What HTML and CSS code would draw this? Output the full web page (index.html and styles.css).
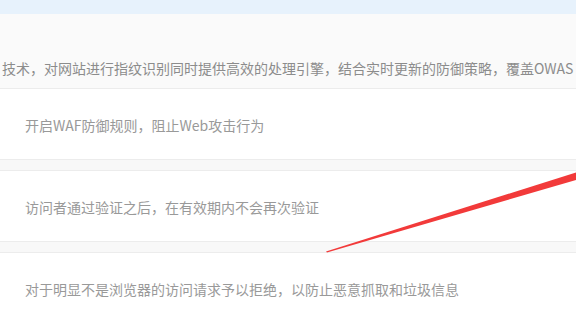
FILE: index.html
```html
<!DOCTYPE html>
<html lang="zh-CN">
<head>
<meta charset="utf-8">
<title>WAF</title>
<link rel="stylesheet" href="styles.css">
</head>
<body>
<div class="page">
  <div class="topbar"></div>
  <div class="intro">
    <p class="intro-text">技术，对网站进行指纹识别同时提供高效的处理引擎，结合实时更新的防御策略，覆盖OWAS</p>
  </div>
  <div class="cards">
    <div class="card"><span class="desc">开启WAF防御规则，阻止Web攻击行为</span></div>
    <div class="card"><span class="desc">访问者通过验证之后，在有效期内不会再次验证</span></div>
    <div class="card"><span class="desc">对于明显不是浏览器的访问请求予以拒绝，以防止恶意抓取和垃圾信息</span></div>
  </div>
  <svg class="arrow" width="576" height="323" viewBox="0 0 576 323">
    <polygon points="326,251.5 576,172.5 576,180 327,252.5" fill="#f23a3a"/>
  </svg>
</div>
</body>
</html>
```
FILE: styles.css
```css
html, body {
  margin: 0;
  padding: 0;
  background: #f8f8f8;
  overflow: hidden;
}
body {
  font-family: "Noto Sans CJK SC", "Noto Sans", sans-serif;
  font-size: 14px;
  color: #999;
}
.page {
  position: relative;
  width: 576px;
  height: 323px;
  overflow: hidden;
}
.topbar {
  height: 14px;
  background: #e7f2fc;
}
.intro {
  height: 75px;
  background: #fafafa;
  border-bottom: 1px solid #ececec;
  box-sizing: border-box;
  padding-top: 44px;
}
.intro-text {
  margin: 0;
  padding-left: 2px;
  line-height: 20px;
  white-space: nowrap;
  color: #8c8c8c;
}
.cards {
  display: flex;
  flex-direction: column;
  gap: 10px;
}
.card {
  height: 68px;
  background: #fff;
  border-bottom: 1px solid #ececec;
  display: flex;
  align-items: center;
  padding-left: 25px;
  padding-top: 2px;
  box-sizing: content-box;
}
.card + .card {
  border-top: 1px solid #ececec;
}
.desc {
  line-height: 20px;
  color: #999;
}
.arrow {
  position: absolute;
  left: 0;
  top: 0;
  pointer-events: none;
}
```
